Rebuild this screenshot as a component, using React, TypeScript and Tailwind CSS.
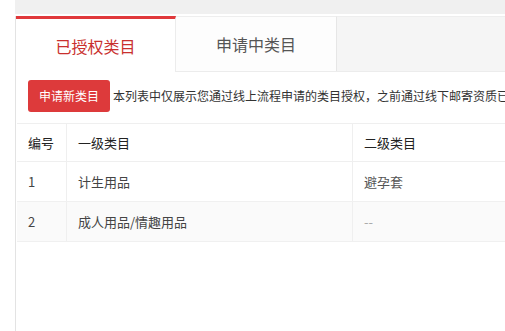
import React from "react";

const rows = [
  { id: "1", a: "计生用品", b: "避孕套", bg: "bg-white", bc: "text-[#555]" },
  { id: "2", a: "成人用品/情趣用品", b: "--", bg: "bg-[#fafafa]", bc: "text-[#aaa]" },
];

export default function App() {
  return (
    <div
      className="w-[505px] h-[331px] overflow-hidden bg-white"
      style={{ fontFamily: '"Noto Sans CJK SC", "Noto Sans", sans-serif' }}
    >
      <div className="ml-[15px] h-[14px] bg-[#f0f0f0]" />
      <div className="ml-[15px] mt-[2px] h-[315px] border-l border-[#e3e3e3] flex flex-col">
        <div className="flex h-[56px] shrink-0 bg-[#f5f5f5] border-b border-[#ececec]">
          <div className="w-[160px] shrink-0 bg-white border-t-[3px] border-[#e0383b] border-r border-r-[#ececec] flex items-center justify-center text-[16px] text-[#c9302e] -mb-px">
            已授权类目
          </div>
          <div className="w-[161px] shrink-0 bg-[#fdfdfd] border-t border-[#eeeeee] border-r border-r-[#e6e6e6] flex items-center justify-center text-[16px] text-[#555]">
            申请中类目
          </div>
          <div className="flex-1 border-t border-[#eeeeee]" />
        </div>
        <div className="flex-1 bg-white overflow-hidden">
          <div className="flex items-center gap-[3px] pl-[12px] pt-[8px] whitespace-nowrap overflow-hidden">
            <div className="w-[82px] h-[32px] shrink-0 rounded-[3px] bg-[#dd3a3b] text-white text-[12px] flex items-center justify-center">
              申请新类目
            </div>
            <div className="text-[12px] text-[#333]">
              本列表中仅展示您通过线上流程申请的类目授权，之前通过线下邮寄资质已
            </div>
          </div>
          <div className="mt-[11px] ml-[1px] w-[600px] text-[13px]">
            <div className="flex h-[39px] border-t border-b border-[#efefef] bg-white text-[#222]">
              <div className="w-[50px] shrink-0 pl-[11px] flex items-center border-r border-[#efefef]">编号</div>
              <div className="w-[286px] shrink-0 pl-[11px] flex items-center border-r border-[#efefef]">一级类目</div>
              <div className="w-[200px] shrink-0 pl-[11px] flex items-center border-r border-[#efefef]">二级类目</div>
            </div>
            {rows.map((r) => (
              <div key={r.id} className={`flex h-[40px] border-b border-[#f0f0f0] ${r.bg} text-[#444]`}>
                <div className="w-[50px] shrink-0 pl-[11px] flex items-center border-r border-[#efefef]">{r.id}</div>
                <div className="w-[286px] shrink-0 pl-[11px] flex items-center border-r border-[#efefef]">{r.a}</div>
                <div className={`w-[200px] shrink-0 pl-[11px] flex items-center border-r border-[#efefef] ${r.bc}`}>{r.b}</div>
              </div>
            ))}
          </div>
        </div>
      </div>
    </div>
  );
}
